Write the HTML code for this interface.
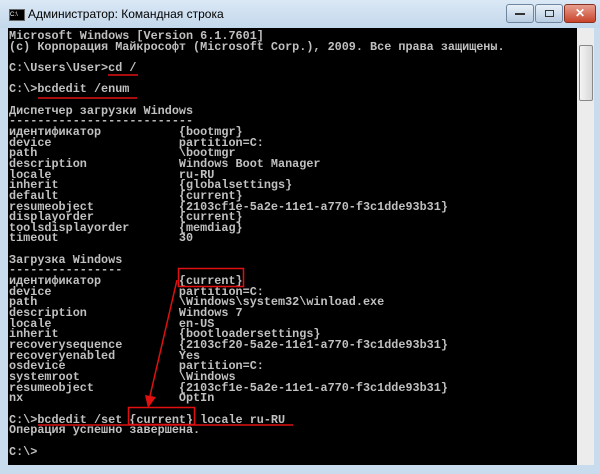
<!DOCTYPE html>
<html><head><meta charset="utf-8"><style>
body{margin:0;width:600px;height:474px;overflow:hidden;background:#c9dcee;font-family:"Liberation Sans",sans-serif;position:relative}
.title{position:absolute;left:0;top:0;width:600px;height:28px;background:linear-gradient(#dbe8f5,#c3d8ec)}
.tt{position:absolute;left:28px;top:7px;font-size:12px;color:#000}
.ic{position:absolute;left:9px;top:9px;width:14px;height:10px;background:#000;border:1px solid #666;color:#fff;font-size:6px;line-height:10px}
.btn{position:absolute;top:4px;height:17px;border:1px solid #6f86a0;border-radius:3px;background:linear-gradient(#e8f0f8,#b9cde2)}
.con{position:absolute;left:8px;top:28px;width:569px;height:437px;background:#000;overflow:hidden}
pre{margin:0;position:absolute;left:1px;top:3px;font-family:"Liberation Mono","DejaVu Sans Mono",monospace;font-size:11.8px;line-height:10.65px;color:#c0c0c0;font-weight:bold;letter-spacing:0}
.sb{position:absolute;left:577px;top:28px;width:17px;height:437px;background:#ececec}
.th{position:absolute;left:579px;top:45px;width:12px;height:54px;background:linear-gradient(90deg,#f4f4f4,#d8d8d8);border:1px solid #888;border-radius:2px}
svg{position:absolute;left:0;top:0}
</style></head><body>
<div class="title"><div class="ic">C:\</div><div class="tt">Администратор: Командная строка</div>
<div class="btn" style="left:506px;width:26px"><div style="position:absolute;left:8px;top:8px;width:10px;height:2px;background:#333"></div></div>
<div class="btn" style="left:535px;width:26px"><div style="position:absolute;left:9px;top:5px;width:7px;height:5px;border:1px solid #333"></div></div>
<div class="btn" style="left:564px;width:30px;background:linear-gradient(#e8a090,#c8442a);border-color:#8a3020;color:#fff;font-weight:bold;font-size:12px;text-align:center;line-height:17px">✕</div>
</div>
<div class="con"><pre>Microsoft Windows [Version 6.1.7601]
(c) Корпорация Майкрософт (Microsoft Corp.), 2009. Все права защищены.

C:\Users\User>cd /

C:\>bcdedit /enum

Диспетчер загрузки Windows
--------------------------
идентификатор           {bootmgr}
device                  partition=C:
path                    \bootmgr
description             Windows Boot Manager
locale                  ru-RU
inherit                 {globalsettings}
default                 {current}
resumeobject            {2103cf1e-5a2e-11e1-a770-f3c1dde93b31}
displayorder            {current}
toolsdisplayorder       {memdiag}
timeout                 30

Загрузка Windows
----------------
идентификатор           {current}
device                  partition=C:
path                    \Windows\system32\winload.exe
description             Windows 7
locale                  en-US
inherit                 {bootloadersettings}
recoverysequence        {2103cf20-5a2e-11e1-a770-f3c1dde93b31}
recoveryenabled         Yes
osdevice                partition=C:
systemroot              \Windows
resumeobject            {2103cf1e-5a2e-11e1-a770-f3c1dde93b31}
nx                      OptIn

C:\>bcdedit /set {current} locale ru-RU
Операция успешно завершена.

C:\></pre></div>
<div class="sb"></div><div class="th"></div>
<svg width="600" height="474">
<g stroke="#e01010" stroke-width="1.5" fill="none">
<line x1="108" y1="75" x2="138" y2="75"/>
<line x1="38" y1="98" x2="137" y2="98"/>
<rect x="178.5" y="268.5" width="65" height="18"/>
<rect x="128.5" y="407.5" width="66" height="17"/>
<line x1="38" y1="425" x2="293" y2="425"/>
<line x1="177" y1="280" x2="150" y2="396"/>
</g>
<polygon points="145,395 156,397 148,408" fill="#e01010"/>
</svg>
</body></html>
